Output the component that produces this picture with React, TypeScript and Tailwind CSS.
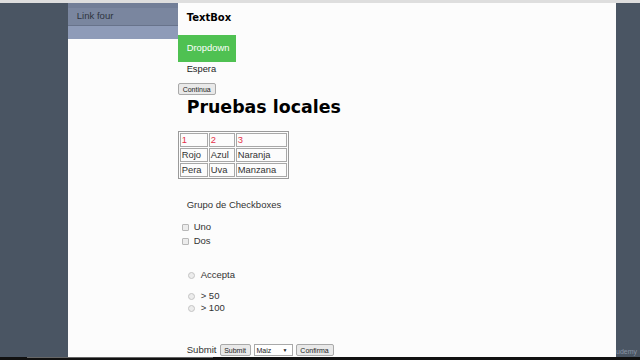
const font = 'font-["Liberation_Sans",Arial,sans-serif]'
const head = 'font-["DejaVu_Sans",Verdana,sans-serif]'

const TABLE = [
  ['1', '2', '3'],
  ['Rojo', 'Azul', 'Naranja'],
  ['Pera', 'Uva', 'Manzana'],
]

function Btn({ label, w }: { label: string; w: string }) {
  return (
    <span
      className={`${w} h-[12px] flex items-center justify-center bg-[#e9e9e9] border border-[#a9a9a9] rounded-[2px] text-[7px] text-[#222] leading-none`}
    >
      {label}
    </span>
  )
}

function Check() {
  return <span className="w-[7px] h-[7px] border border-[#b8b8b8] bg-[#ececec] rounded-[1px]" />
}

function Radio() {
  return <span className="w-[7px] h-[7px] border border-[#c4c4c4] bg-[#ececec] rounded-full" />
}

export default function App() {
  return (
    <div className={`w-[640px] h-[360px] flex flex-col overflow-hidden bg-[#4a5563] ${font}`}>
      <div className="h-[3px] shrink-0 bg-[#dedede]" />
      <div className="flex-1 flex min-h-0 overflow-hidden">
        <div className="w-[68px] bg-[#4a5563]" />

        {/* page */}
        <div className="w-[551px] bg-[#fcfcfc] flex">
          {/* side nav */}
          <div className="w-[110px] shrink-0">
            <div className="h-[5px] bg-[#727e97]" />
            <div className="h-[18px] bg-[#7a869f] border-b border-[#68738b] flex items-center pl-[9px] text-[9.6px] text-[#2f3440]">
              Link four
            </div>
            <div className="h-[13px] bg-[#8e9bb8]" />
          </div>

          {/* content */}
          <div className="flex-1 text-[#222]">
            <div className={`${head} font-bold text-[10px] text-black pl-[9px] mt-[8px] leading-[14px]`}>TextBox</div>
            <div className="mt-[10px] w-[58px] h-[27px] bg-[#4fc152] text-white text-[9.4px] flex items-center pl-[9px]">
              Dropdown
            </div>
            <div className="pl-[9px] mt-[1px] text-[9.3px] leading-[12px]">Espera</div>
            <div className="mt-[8px] flex">
              <Btn label="Continua" w="w-[38px]" />
            </div>
            <h1 className={`${head} font-bold text-[17.4px] text-black pl-[9px] leading-[20px] mt-[2px]`}>
              Pruebas locales
            </h1>

            <table className="mt-[14px] w-[111px] border border-[#9a9a9a] border-separate border-spacing-[1px] text-[9.4px] leading-[12px]">
              <tbody>
                {TABLE.map((row, i) => (
                  <tr key={i}>
                    {row.map((c, j) => (
                      <td
                        key={j}
                        className={`border border-[#a8a8a8] px-[1px] h-[14px] ${
                          j === 0 ? 'w-[28px]' : j === 1 ? 'w-[26px]' : ''
                        } ${i === 0 ? 'text-[#e5324a]' : 'text-[#333]'}`}
                      >
                        {c}
                      </td>
                    ))}
                  </tr>
                ))}
              </tbody>
            </table>

            <div className="pl-[9px] mt-[20px] text-[9.5px] leading-[12px] text-[#333]">Grupo de Checkboxes</div>

            <div className="mt-[10px] flex flex-col gap-[2px] text-[9.5px] leading-[12px] text-[#333]">
              <label className="flex items-center gap-[5px] pl-[4px]">
                <Check />
                Uno
              </label>
              <label className="flex items-center gap-[5px] pl-[4px]">
                <Check />
                Dos
              </label>
            </div>

            <label className="mt-[22px] flex items-center gap-[6px] pl-[10px] text-[9.5px] leading-[12px] text-[#333]">
              <Radio />
              Accepta
            </label>

            <div className="mt-[9px] flex flex-col text-[9.5px] leading-[12px] text-[#333]">
              <label className="flex items-center gap-[6px] pl-[10px]">
                <Radio />
                &gt; 50
              </label>
              <label className="flex items-center gap-[6px] pl-[10px]">
                <Radio />
                &gt; 100
              </label>
            </div>

            <div className="mt-[29px] flex items-center pl-[9px] text-[9.6px] text-[#333]">
              <span className="mr-[3px]">Submit</span>
              <Btn label="Submit" w="w-[31px]" />
              <span className="ml-[3px] w-[39px] h-[12px] border border-[#a9a9a9] bg-white flex items-center justify-between px-[2px] text-[7px] leading-none text-[#222]">
                Maiz
                <span className="text-[5px] mr-[2px]">▼</span>
              </span>
              <span className="ml-[3px]">
                <Btn label="Confirma" w="w-[38px]" />
              </span>
            </div>
          </div>
        </div>

        <div className="flex-1 bg-[#4a5563] flex items-end justify-end pr-[3px] pb-[2px]">
          <span className="text-[7px] text-[#8893a3] leading-none">udemy</span>
        </div>
      </div>
      <div className="h-[3px] shrink-0 bg-[#111] flex">
        <div className="ml-[27px] w-[186px] h-[1px] bg-[#666]" />
      </div>
    </div>
  )
}
